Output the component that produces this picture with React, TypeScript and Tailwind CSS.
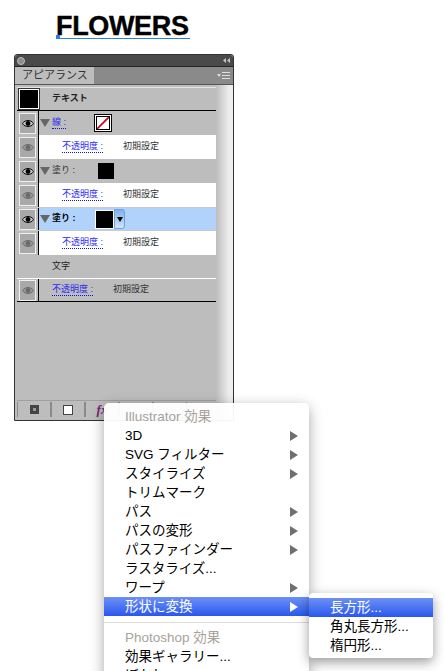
const jp = "font-['Liberation_Sans','Noto_Sans_CJK_JP',sans-serif]";

function Eye({ dim }: { dim?: boolean }) {
  const c = dim ? "#6a6a6a" : "#000";
  return (
    <svg width="12" height="9" viewBox="0 0 12 9">
      <path d="M0.5 4.5 C3 0.5 9 0.5 11.5 4.5 C9 8.5 3 8.5 0.5 4.5Z" fill={dim ? "#9a9a9a" : "#c8c8c8"} stroke={c} strokeWidth="1" />
      <circle cx="6" cy="4.5" r="2.4" fill={c} />
    </svg>
  );
}

function EyeCell({ dim }: { dim?: boolean }) {
  return (
    <div className="w-[22px] shrink-0 h-full flex items-center justify-center bg-[#bdbdbd] border-r border-black">
      <div className="w-[17px] h-[21px] border border-[#f0f0f0] bg-[#a9a9a9] flex items-center justify-center">
        <Eye dim={dim} />
      </div>
    </div>
  );
}

function Tri() {
  return <div className="w-0 h-0 border-l-[5px] border-r-[5px] border-t-[8px] border-l-transparent border-r-transparent border-t-[#666] ml-[1px] mr-[2px]" />;
}

function Link({ children }: { children: string }) {
  return <span className="text-[#2a2af0] border-b border-dotted border-[#1111cc] leading-[12px] pb-[1px]">{children}</span>;
}

function OpacityRow() {
  return (
    <div className="h-[24px] flex items-center bg-white">
      <EyeCell dim />
      <div className="ml-[23px] w-[61px]"><Link>不透明度 :</Link></div>
      <span className="text-[#333]">初期設定</span>
    </div>
  );
}

function FillRow({ label, selected, children, link }: { label: string; selected?: boolean; children: React.ReactNode; link?: boolean }) {
  return (
    <div className={`h-[24px] flex items-center ${selected ? "bg-[#b1d2fb] border-y border-[#c9c9c9]" : ""}`}>
      <EyeCell />
      <Tri />
      <div className={`w-[33px] ${selected ? "text-black font-bold" : "text-[#333]"}`}>{link ? <Link>{label}</Link> : label}</div>
      {children}
    </div>
  );
}

function Item({ label, arrow, head, active }: { label: string; arrow?: boolean; head?: boolean; active?: boolean }) {
  return (
    <div className={`h-[19px] flex items-center pl-[21px] pr-[11px] justify-between ${active ? "bg-gradient-to-b from-[#6d8ff5] to-[#2a56ee] text-white" : head ? "text-[#a8a29c]" : "text-black"}`}>
      <span>{label}</span>
      {arrow && <span className={`w-0 h-0 border-y-[5px] border-y-transparent border-l-[8px] ${active ? "border-l-white" : "border-l-[#6f6f6f]"}`} />}
    </div>
  );
}

function ToolBtn({ children }: { children?: React.ReactNode }) {
  return (
    <div className="h-[15px] w-[34px] border-x border-[#8a8a8a] flex items-center justify-center">{children}</div>
  );
}

export default function App() {
  return (
    <div className={`relative w-[444px] h-[671px] bg-white overflow-hidden ${jp}`}>
      <div className="h-[54px] pl-[56px] pt-[13px]">
        <div className="relative w-[134px] h-[26px] border-b border-[#2b7de9] text-[27px] leading-[26px] font-bold text-black tracking-[-0.35px] [-webkit-text-stroke:0.4px_black] font-['Liberation_Sans',sans-serif]">
          FLOWERS
          <span className="absolute left-0 bottom-[-1px] w-[4px] h-[4px] bg-[#2b7de9]" />
        </div>
      </div>

      <div className="ml-[14px] w-[220px] h-[367px] bg-[#bdbdbd] border border-[#333] rounded-t-[3px] text-[9px] flex flex-col">
        <div className="h-[12px] shrink-0 bg-[#4a4a4a] rounded-t-[3px] flex items-center justify-between px-[2px] border-b border-[#222]">
          <span className="w-[8px] h-[8px] rounded-full bg-[#8c8c8c] border border-[#bbb]" />
          <svg width="7" height="5" viewBox="0 0 7 5" className="mr-[1px]">
            <path d="M3 0 L0 2.5 L3 5Z M7 0 L4 2.5 L7 5Z" fill="#c4c4c4" />
          </svg>
        </div>
        <div className="h-[18px] shrink-0 bg-[#8a8a8a] flex items-stretch justify-between border-b border-[#555]">
          <div className="w-[79px] bg-[#bdbdbd] flex items-center pl-[7px] text-[11px] text-[#333]">アピアランス</div>
          <div className="flex items-center pr-[3px] gap-[1px]">
            <span className="w-0 h-0 border-x-[2px] border-x-transparent border-t-[3px] border-t-[#ddd]" />
            <div className="w-[8px] h-[7px] border-y border-[#ddd] flex items-center"><div className="w-full h-px bg-[#ddd]" /></div>
          </div>
        </div>
        <div className="flex-1 flex min-h-0">
          <div className="w-[201px] ml-[2px] flex flex-col">
            <div className="h-[1px] mt-[2px] bg-[#e4e4e4]" />
            <div className="h-[23px] flex items-center border-b border-black">
              <div className="ml-[2px] w-[20px] h-[20px] bg-black border-[1.5px] border-white outline outline-1 outline-[#333]" />
              <span className="ml-[13px] font-bold text-[#222]">テキスト</span>
            </div>
            <FillRow label="線 :" link>
              <div className="ml-[9px] w-[18px] h-[18px] border border-black bg-white p-px">
                <svg width="14" height="14" viewBox="0 0 14 14" className="border border-black">
                  <path d="M0 14 L14 0" stroke="#d0021b" strokeWidth="2" />
                </svg>
              </div>
            </FillRow>
            <OpacityRow />
            <FillRow label="塗り :">
              <div className="ml-[13px] w-[16px] h-[16px] bg-black" />
            </FillRow>
            <OpacityRow />
            <FillRow label="塗り :" selected>
              <div className="ml-[10px] flex items-center">
                <div className="w-[19px] h-[19px] bg-black border border-white" />
                <div className="w-[11px] h-[20px] rounded-r-[3px] bg-gradient-to-b from-[#7fb2ea] to-[#cfe3fa] border border-[#6fa0d8] flex items-center justify-center">
                  <span className="w-0 h-0 border-x-[3px] border-x-transparent border-t-[5px] border-t-black" />
                </div>
              </div>
            </FillRow>
            <OpacityRow />
            <div className="h-[24px] flex items-center pl-[35px] text-[#222] border-b border-white">文字</div>
            <div className="h-[23px] flex items-center border-b border-black">
              <EyeCell dim />
              <div className="ml-[13px] w-[61px]"><Link>不透明度 :</Link></div>
              <span className="text-[#333]">初期設定</span>
            </div>
            <div className="flex-1" />
            <div className="h-[20px] flex items-start pt-[1px] border-t border-[#a0a0a0]">
              <ToolBtn><div className="w-[9px] h-[9px] bg-[#444] flex items-center justify-center"><div className="w-[3px] h-[3px] bg-[#999]" /></div></ToolBtn>
              <ToolBtn><div className="w-[10px] h-[10px] bg-white border border-[#444]" /></ToolBtn>
              <ToolBtn><span className="font-['Liberation_Serif',serif] italic font-bold text-[13px] text-[#7a1f7a] leading-none">fx</span></ToolBtn>
              <ToolBtn />
              <ToolBtn />
            </div>
          </div>
          <div className="w-[14px] bg-gradient-to-r from-[#bdbdbd] to-[#f2f2f2]" />
          <div className="w-[3px] bg-[#efefef]" />
        </div>
      </div>

      <div className="absolute left-[104px] top-[403px] w-[205px] h-[280px] bg-white/95 rounded-[5px] shadow-[0_4px_14px_rgba(0,0,0,0.35)] pt-[4px] text-[13.5px] leading-[19px]">
        <Item label="Illustrator 効果" head />
        <Item label="3D" arrow />
        <Item label="SVG フィルター" arrow />
        <Item label="スタイライズ" arrow />
        <Item label="トリムマーク" />
        <Item label="パス" arrow />
        <Item label="パスの変形" arrow />
        <Item label="パスファインダー" arrow />
        <Item label="ラスタライズ..." />
        <Item label="ワープ" arrow />
        <Item label="形状に変換" arrow active />
        <div className="h-[12px] flex items-center"><div className="w-full h-px bg-[#dcdcdc]" /></div>
        <Item label="Photoshop 効果" head />
        <Item label="効果ギャラリー..." />
        <Item label="ぼかし" />
      </div>

      <div className="absolute left-[309px] top-[593px] w-[124px] h-[65px] bg-white rounded-[4px] shadow-[0_4px_12px_rgba(0,0,0,0.4)] pt-[5px] text-[13.5px] leading-[19px]">
        <div className="h-[19px] pl-[21px] flex items-center bg-gradient-to-b from-[#6d8ff5] to-[#2a56ee] text-white">長方形...</div>
        <div className="h-[19px] pl-[21px] flex items-center text-black">角丸長方形...</div>
        <div className="h-[19px] pl-[21px] flex items-center text-black">楕円形...</div>
      </div>
    </div>
  );
}
